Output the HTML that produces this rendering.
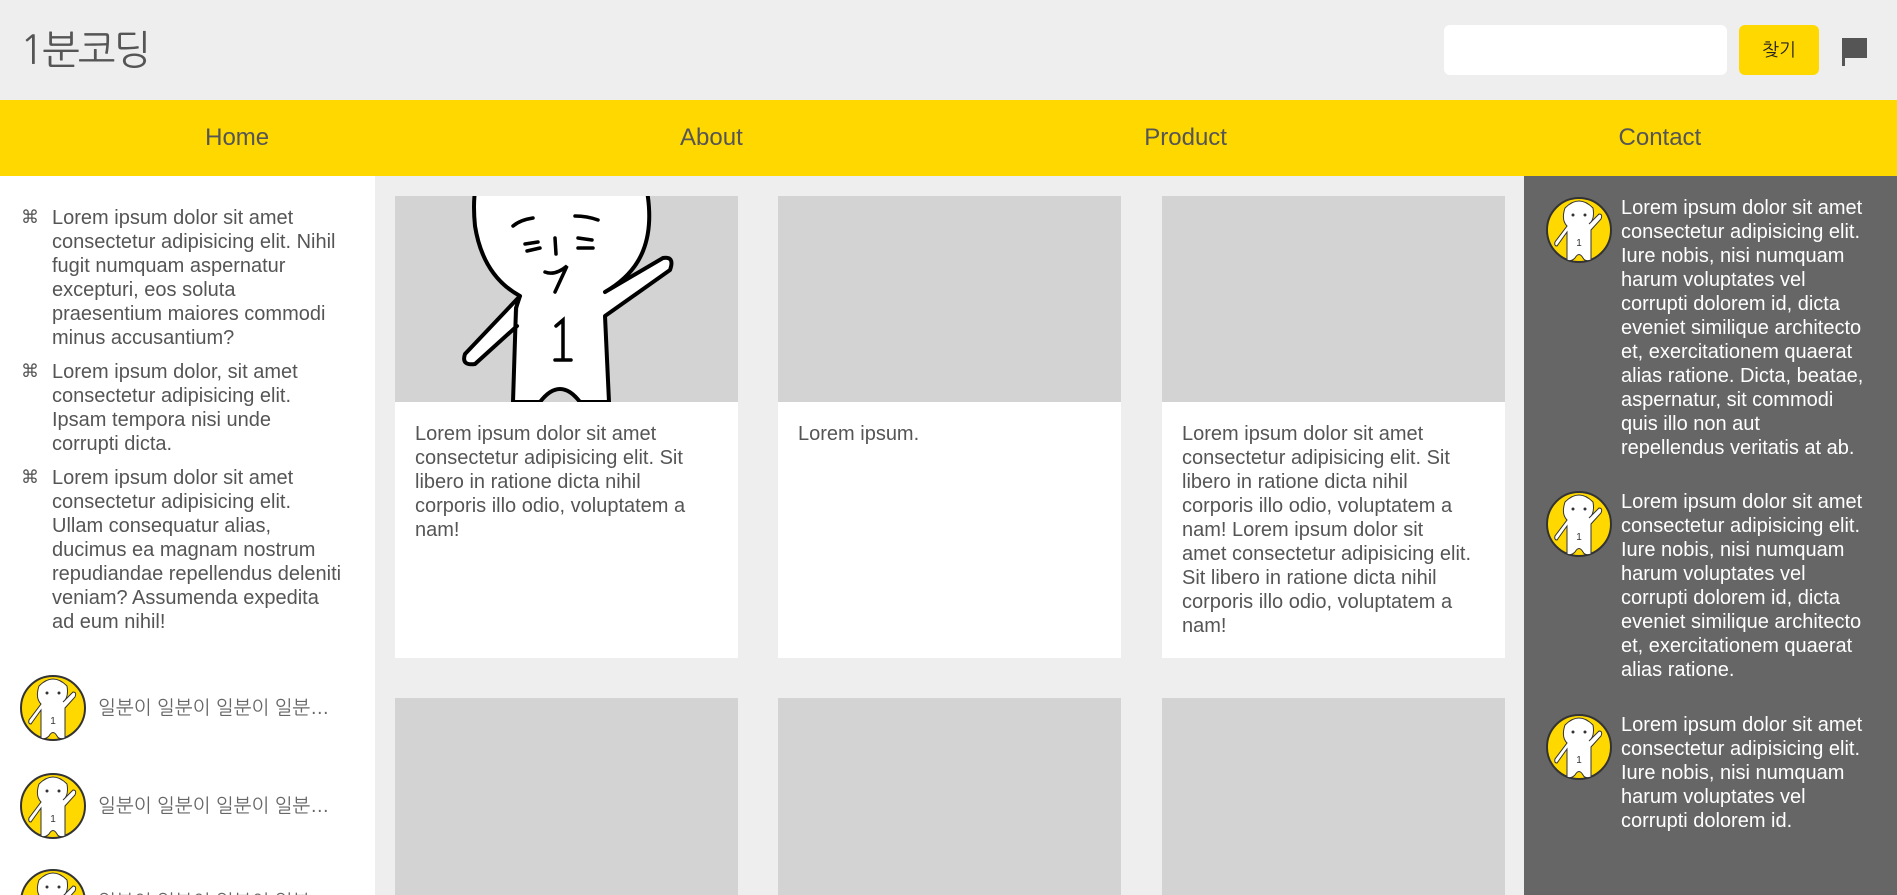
<!DOCTYPE html>
<html><head><meta charset="utf-8">
<style>
*{margin:0;padding:0;box-sizing:border-box}
html,body{width:1897px;height:895px;overflow:hidden}
body{background:#eee;font-family:"Liberation Sans Narrow","Liberation Sans","NanumGothic",sans-serif;color:#555}
#wrap{position:relative;width:1897px;height:895px;overflow:hidden}
.hdr{position:absolute;left:0;top:0;width:1897px;height:100px;background:#eee}
.logo{position:absolute;left:20px;top:26px;font-family:"NanumGothic","Noto Sans CJK KR",sans-serif;font-size:40px;line-height:48px;color:#555;font-weight:normal;letter-spacing:-2px}
.inp{position:absolute;left:1444px;top:25px;width:283px;height:50px;background:#fff;border-radius:6px}
.btn{position:absolute;left:1739px;top:25px;width:80px;height:50px;background:#ffd800;border-radius:6px;font-family:"NanumGothic","Noto Sans CJK KR",sans-serif;font-size:18px;color:#222;text-align:center;line-height:50px}
.nav{position:absolute;left:0;top:100px;width:1897px;height:76px;background:#ffd800;display:flex}
.nav div{flex:1;text-align:center;line-height:76px;font-size:24px;color:#555;font-family:"Liberation Sans",sans-serif}
.left{position:absolute;left:0;top:176px;width:375px;height:719px;background:#fff;overflow:hidden}
.txt{font-size:20px;line-height:24px;white-space:nowrap}
.li{position:absolute;left:52px}
.li:before{content:"⌘";position:absolute;left:-31px;top:0;font-family:"DejaVu Sans",sans-serif;font-size:18px}
.right{position:absolute;left:1524px;top:176px;width:373px;height:719px;background:#666;color:#fff}
.card{position:absolute;width:343px;background:#fff}
.img{height:206px;background:#d3d3d3;overflow:hidden}
.ct{padding:20px 20px;}
.av{position:absolute;width:68px;height:68px}
.kt{font-family:"Liberation Sans","NanumGothic","Noto Sans CJK KR",sans-serif;font-size:19px;color:#666;position:absolute;left:98px}
</style></head><body><div id="wrap">
<div class="hdr">
<div class="logo">1분코딩</div>
<div class="inp"></div>
<div class="btn">찾기</div>
<svg style="position:absolute;left:1842px;top:37px" width="26" height="30" viewBox="0 0 26 30"><rect x="0" y="1" width="3" height="28" fill="#555"/><path d="M3 1 H25 V21 H3 Z" fill="#555"/></svg>
</div>
<div class="nav"><div>Home</div><div>About</div><div>Product</div><div>Contact</div></div>

<div class="left">
<div class="txt li" style="top:30px">Lorem ipsum dolor sit amet<br>consectetur adipisicing elit. Nihil<br>fugit numquam aspernatur<br>excepturi, eos soluta<br>praesentium maiores commodi<br>minus accusantium?</div>
<div class="txt li" style="top:184px">Lorem ipsum dolor, sit amet<br>consectetur adipisicing elit.<br>Ipsam tempora nisi unde<br>corrupti dicta.</div>
<div class="txt li" style="top:290px">Lorem ipsum dolor sit amet<br>consectetur adipisicing elit.<br>Ullam consequatur alias,<br>ducimus ea magnam nostrum<br>repudiandae repellendus deleniti<br>veniam? Assumenda expedita<br>ad eum nihil!</div>

<svg class="av" style="left:19px;top:498px" viewBox="0 0 68 68"><circle cx="34" cy="34" r="32" fill="#ffd800" stroke="#333" stroke-width="2"/><path d="M20 12 Q34 -2 48 12 Q50 24 44 28 L54 18 Q58 18 56 23 L46 34 L46 64 Q40 66 38 62 Q34 55 30 62 Q26 66 22 64 L22 36 L12 50 Q9 50 10 46 L22 30 Q16 24 20 12Z" fill="#fff" stroke="#333" stroke-width="1"/><text x="34" y="50" font-size="10" text-anchor="middle" fill="#333" font-family="Liberation Sans">1</text><circle cx="28" cy="19" r="1.5" fill="#333"/><circle cx="40" cy="19" r="1.5" fill="#333"/></svg>
<div class="kt" style="top:520px">일분이 일분이 일분이 일분…</div>
<svg class="av" style="left:19px;top:596px" viewBox="0 0 68 68"><circle cx="34" cy="34" r="32" fill="#ffd800" stroke="#333" stroke-width="2"/><path d="M20 12 Q34 -2 48 12 Q50 24 44 28 L54 18 Q58 18 56 23 L46 34 L46 64 Q40 66 38 62 Q34 55 30 62 Q26 66 22 64 L22 36 L12 50 Q9 50 10 46 L22 30 Q16 24 20 12Z" fill="#fff" stroke="#333" stroke-width="1"/><text x="34" y="50" font-size="10" text-anchor="middle" fill="#333" font-family="Liberation Sans">1</text><circle cx="28" cy="19" r="1.5" fill="#333"/><circle cx="40" cy="19" r="1.5" fill="#333"/></svg>
<div class="kt" style="top:618px">일분이 일분이 일분이 일분…</div>
<svg class="av" style="left:19px;top:692px" viewBox="0 0 68 68"><circle cx="34" cy="34" r="32" fill="#ffd800" stroke="#333" stroke-width="2"/><path d="M20 12 Q34 -2 48 12 Q50 24 44 28 L54 18 Q58 18 56 23 L46 34 L46 64 Q40 66 38 62 Q34 55 30 62 Q26 66 22 64 L22 36 L12 50 Q9 50 10 46 L22 30 Q16 24 20 12Z" fill="#fff" stroke="#333" stroke-width="1"/><circle cx="28" cy="19" r="1.5" fill="#333"/><circle cx="40" cy="19" r="1.5" fill="#333"/></svg>
<div class="kt" style="top:714px">일분이 일분이 일분이 일분…</div>
</div>

<div class="card" style="left:395px;top:196px;height:462px">
<div class="img"><svg width="343" height="206" viewBox="0 0 343 206"><g fill="#fff" stroke="#000" stroke-width="4" stroke-linejoin="round" stroke-linecap="round">
<path d="M118 206 L121 112 L125 100 Q88 80 80 30 Q78 10 80 -5 L252 -5 Q258 30 248 55 Q238 80 210 96 L268 62 Q280 60 275 74 L210 120 L214 206 Z M125 100 L70 158 Q66 170 80 168 L122 130"/>
<path d="M145 206 Q165 180 185 206" fill="#d3d3d3"/>
</g>
<g fill="none" stroke="#000" stroke-width="3.5" stroke-linecap="round">
<path d="M118 30 Q125 24 138 22"/><path d="M180 20 Q192 20 203 24"/>
<path d="M130 48 L143 46 M132 55 L145 52"/><path d="M183 42 L197 44 M183 52 L198 52"/>
<path d="M160 42 L161 58"/><path d="M150 76 Q160 80 172 70 L160 96"/>
<path d="M161 130 L168 124 L168 164 M160 164 L176 164"/>
</g></svg></div>
<div class="ct txt">Lorem ipsum dolor sit amet<br>consectetur adipisicing elit. Sit<br>libero in ratione dicta nihil<br>corporis illo odio, voluptatem a<br>nam!</div>
</div>
<div class="card" style="left:778px;top:196px;height:462px"><div class="img"></div><div class="ct txt">Lorem ipsum.</div></div>
<div class="card" style="left:1162px;top:196px;height:462px"><div class="img"></div><div class="ct txt">Lorem ipsum dolor sit amet<br>consectetur adipisicing elit. Sit<br>libero in ratione dicta nihil<br>corporis illo odio, voluptatem a<br>nam! Lorem ipsum dolor sit<br>amet consectetur adipisicing elit.<br>Sit libero in ratione dicta nihil<br>corporis illo odio, voluptatem a<br>nam!</div></div>
<div class="card" style="left:395px;top:698px;height:197px"><div class="img" style="height:197px"></div></div>
<div class="card" style="left:778px;top:698px;height:197px"><div class="img" style="height:197px"></div></div>
<div class="card" style="left:1162px;top:698px;height:197px"><div class="img" style="height:197px"></div></div>

<div class="right">
<svg class="av" style="left:21px;top:20px" viewBox="0 0 68 68"><circle cx="34" cy="34" r="32" fill="#ffd800" stroke="#333" stroke-width="2"/><path d="M20 12 Q34 -2 48 12 Q50 24 44 28 L54 18 Q58 18 56 23 L46 34 L46 64 Q40 66 38 62 Q34 55 30 62 Q26 66 22 64 L22 36 L12 50 Q9 50 10 46 L22 30 Q16 24 20 12Z" fill="#fff" stroke="#333" stroke-width="1"/><text x="34" y="50" font-size="10" text-anchor="middle" fill="#333" font-family="Liberation Sans">1</text><circle cx="28" cy="19" r="1.5" fill="#333"/><circle cx="40" cy="19" r="1.5" fill="#333"/></svg>
<div class="txt" style="position:absolute;left:97px;top:20px">Lorem ipsum dolor sit amet<br>consectetur adipisicing elit.<br>Iure nobis, nisi numquam<br>harum voluptates vel<br>corrupti dolorem id, dicta<br>eveniet similique architecto<br>et, exercitationem quaerat<br>alias ratione. Dicta, beatae,<br>aspernatur, sit commodi<br>quis illo non aut<br>repellendus veritatis at ab.</div>
<svg class="av" style="left:21px;top:314px" viewBox="0 0 68 68"><circle cx="34" cy="34" r="32" fill="#ffd800" stroke="#333" stroke-width="2"/><path d="M20 12 Q34 -2 48 12 Q50 24 44 28 L54 18 Q58 18 56 23 L46 34 L46 64 Q40 66 38 62 Q34 55 30 62 Q26 66 22 64 L22 36 L12 50 Q9 50 10 46 L22 30 Q16 24 20 12Z" fill="#fff" stroke="#333" stroke-width="1"/><text x="34" y="50" font-size="10" text-anchor="middle" fill="#333" font-family="Liberation Sans">1</text><circle cx="28" cy="19" r="1.5" fill="#333"/><circle cx="40" cy="19" r="1.5" fill="#333"/></svg>
<div class="txt" style="position:absolute;left:97px;top:314px">Lorem ipsum dolor sit amet<br>consectetur adipisicing elit.<br>Iure nobis, nisi numquam<br>harum voluptates vel<br>corrupti dolorem id, dicta<br>eveniet similique architecto<br>et, exercitationem quaerat<br>alias ratione.</div>
<svg class="av" style="left:21px;top:537px" viewBox="0 0 68 68"><circle cx="34" cy="34" r="32" fill="#ffd800" stroke="#333" stroke-width="2"/><path d="M20 12 Q34 -2 48 12 Q50 24 44 28 L54 18 Q58 18 56 23 L46 34 L46 64 Q40 66 38 62 Q34 55 30 62 Q26 66 22 64 L22 36 L12 50 Q9 50 10 46 L22 30 Q16 24 20 12Z" fill="#fff" stroke="#333" stroke-width="1"/><text x="34" y="50" font-size="10" text-anchor="middle" fill="#333" font-family="Liberation Sans">1</text><circle cx="28" cy="19" r="1.5" fill="#333"/><circle cx="40" cy="19" r="1.5" fill="#333"/></svg>
<div class="txt" style="position:absolute;left:97px;top:537px">Lorem ipsum dolor sit amet<br>consectetur adipisicing elit.<br>Iure nobis, nisi numquam<br>harum voluptates vel<br>corrupti dolorem id.</div>
</div>
</div></body></html>
